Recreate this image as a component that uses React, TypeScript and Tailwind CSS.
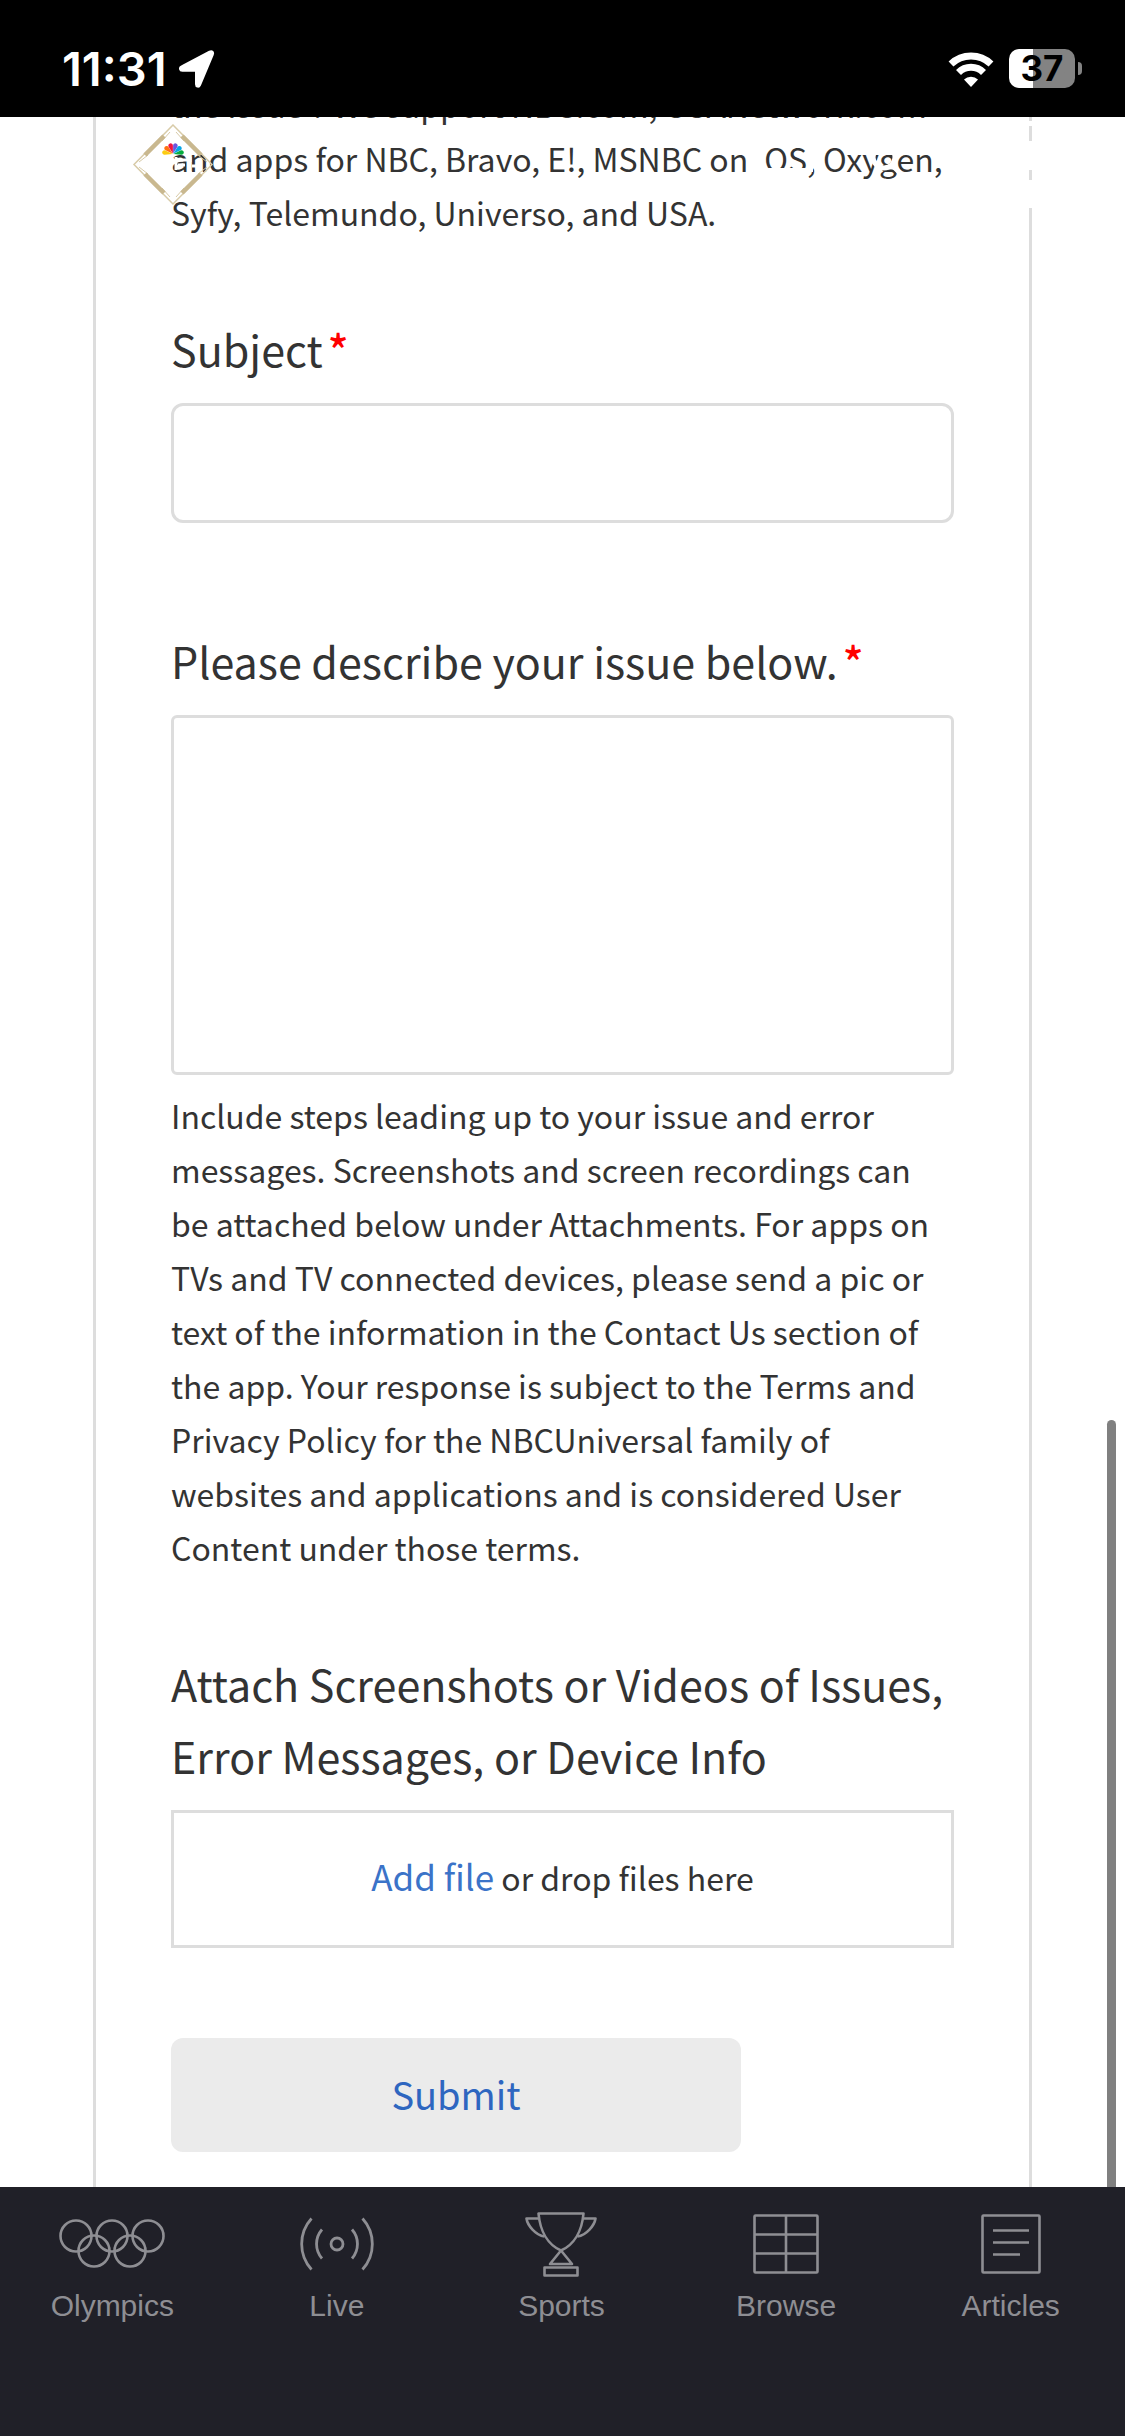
import React from 'react';

const fieldLabel = 'text-[43px] leading-[72px]';
const helpText = 'text-[32px] leading-[54px]';

const tabs = [
  { label: 'Olympics', icon: <OlympicsIcon /> },
  { label: 'Live', icon: <LiveIcon /> },
  { label: 'Sports', icon: <TrophyIcon /> },
  { label: 'Browse', icon: <BrowseIcon /> },
  { label: 'Articles', icon: <ArticlesIcon /> },
];

function OlympicsIcon() {
  return (
    <svg className="h-[66px] w-[108px]" viewBox="0 0 108 66" fill="none" stroke="currentColor" strokeWidth="2.6" aria-hidden="true">
      <circle cx="18" cy="25" r="15.5" />
      <circle cx="54" cy="25" r="15.5" />
      <circle cx="90" cy="25" r="15.5" />
      <circle cx="36" cy="40" r="15.5" />
      <circle cx="72" cy="40" r="15.5" />
    </svg>
  );
}

function LiveIcon() {
  return (
    <svg className="h-[66px] w-[76px]" viewBox="0 0 76 66" fill="none" stroke="currentColor" strokeWidth="2.8" aria-hidden="true">
      <circle cx="38" cy="33" r="6" />
      <path d="M23 18.500a22 22 0 0 0 0 29M53 18.500a22 22 0 0 1 0 29M12.500 7.500a38 38 0 0 0 0 51M63.500 7.500a38 38 0 0 1 0 51" />
    </svg>
  );
}

function TrophyIcon() {
  return (
    <svg className="h-[66px] w-[74px]" viewBox="0 0 74 66" fill="none" stroke="currentColor" strokeWidth="2.6" strokeLinejoin="round" aria-hidden="true">
      <path d="M14.500 2.500h45c-1.500 17-9 31-22.500 37C23.500 33.500 16 19.500 14.500 2.500z" />
      <path d="M14.500 7.500H2.500c1 7 9 16.500 18 18M59.500 7.500h12c-1 7-9 16.500-18 18M37 39.500L26 53h22zM20.500 56.500h33v8h-33z" />
    </svg>
  );
}

function BrowseIcon() {
  return (
    <svg className="h-[66px] w-[66px]" viewBox="0 0 66 66" fill="none" stroke="currentColor" strokeWidth="2.6" aria-hidden="true">
      <rect x="1.500" y="4.500" width="63" height="57" rx="1" />
      <path d="M33 4.500v57M1.500 23.500h63M1.500 42.500h63" />
    </svg>
  );
}

function ArticlesIcon() {
  return (
    <svg className="h-[66px] w-[60px]" viewBox="0 0 60 66" fill="none" stroke="currentColor" strokeWidth="2.6" aria-hidden="true">
      <rect x="1.500" y="4.500" width="57" height="57" rx="1" />
      <path d="M12 19.500h36M12 31.500h36M12 43.500h27" />
    </svg>
  );
}

const feathers = [
  { angle: -80, color: '#fccc12' },
  { angle: -48, color: '#ff7112' },
  { angle: -16, color: '#ef1541' },
  { angle: 16, color: '#6e55dc' },
  { angle: 48, color: '#05a5e6' },
  { angle: 80, color: '#05ac3f' },
];

function LogoBadge() {
  return (
    <svg className="absolute left-[132px] top-[7px] h-[82px] w-[82px]" viewBox="0 0 82 82" fill="none" aria-hidden="true">
      <path d="M44 33v13M48 36h7M46 41h7M58 33v5M60 42h5M58 47v3" stroke="#fff" strokeWidth="3" />
      {feathers.map(({ angle, color }) => (
        <path key={color} d="M41 29.500l-2.200-7.500a2.300 2.300 0 1 1 4.400 0z" fill={color} transform={`rotate(${angle} 41 30)`} />
      ))}
      <path d="M41 1L80 40.500L41 80L2 40.500z" stroke="#d8cba8" strokeWidth="1.500" />
      <path d="M38 8l-8 9M44 8l8 9M38 73l-8-9M44 73l8-9M7 38l9-7M7 43l9 7M75 38l-9-7M75 43l-9 7" stroke="#d8cba8" strokeWidth="1" />
      <path d="M32 12L13 31M50 12L69 31M32 69L13 50M50 69L69 50" stroke="#c9b88f" strokeWidth="4.500" />
    </svg>
  );
}

// White toolbar icons, they only show where they pass over the form
function ToolbarIcons() {
  return (
    <svg className="absolute right-[65px] top-0 h-[92px] w-[310px]" viewBox="0 0 310 92" fill="none" stroke="#fff" aria-hidden="true">
      <path d="M10 20v36" strokeWidth="9" />
      <path d="M15 53h48" strokeWidth="4" />
      <circle cx="134" cy="40" r="11" strokeWidth="5" />
      <path d="M142 48l13 13" strokeWidth="5" />
      <path d="M281 4v5M281 24v29M281 63v28" strokeWidth="8" />
    </svg>
  );
}

function StatusBar() {
  return (
    <header className="flex h-[117px] shrink-0 items-center justify-between bg-black pl-[62px] pr-[43px] pt-[20px] text-white">
      <div className="flex items-center gap-[12px]">
        <span className="font-['Inter',sans-serif] text-[47px] font-semibold leading-[52px]">11:31</span>
        <svg className="h-[38px] w-[36px]" viewBox="0 0 36 38" fill="currentColor" stroke="currentColor" strokeWidth="2" strokeLinejoin="round" aria-hidden="true">
          <path d="M30.500 1.600c2.600-1.200 4.200.5 3.300 2.900L21 35c-1 2.500-4 2-4-.8V20.700H3.400c-2.800 0-3.300-3.100-.8-4.200z" />
        </svg>
      </div>
      <div className="flex items-center gap-[15px]">
        <svg className="h-[36px] w-[46px]" viewBox="0 0 46 36" fill="none" stroke="currentColor" strokeWidth="7" aria-hidden="true">
          <path d="M3 13a29 29 0 0 1 40 0M10.500 21.500a17.500 17.500 0 0 1 25 0" />
          <path d="M16 28.500a10 10 0 0 1 14 0L23 36z" fill="currentColor" stroke="none" />
        </svg>
        <div className="flex items-center gap-[3px]">
          <div className="flex h-[39px] w-[66px] items-center justify-center rounded-[10px] bg-linear-to-r from-white from-37% to-[#838383] to-37%">
            <span className="font-['Inter',sans-serif] text-[35px] font-bold leading-[39px] text-black">37</span>
          </div>
          <div className="h-[13px] w-[4px] rounded-r-full bg-[#838383]" />
        </div>
      </div>
    </header>
  );
}

const Required = () => <span className="ml-[5px] font-medium leading-none text-[#f00]">*</span>;

export default function App() {
  return (
    <div className="flex h-screen flex-col bg-white font-['Noto_Sans_CJK_SC',sans-serif] text-[#333]">
      <StatusBar />

      <main className="relative flex min-h-0 flex-1 flex-col justify-end overflow-hidden px-[93px]">
        <form className="border-x-[3px] border-[#ddd] px-[75px] pb-[35px]" onSubmit={(e) => e.preventDefault()}>
          <p className={helpText}>
            the issue ? We support NBC.com, USANetwork.com and apps for NBC, Bravo, E!, MSNBC on iOS, Oxygen, Syfy, Telemundo, Universo, and USA.
          </p>

          <div className="mt-[73px]">
            <label htmlFor="subject" className={`${fieldLabel} block`}>Subject<Required /></label>
            <input id="subject" type="text" required className="mt-[19px] block h-[120px] w-full rounded-[12px] border-[3px] border-[#ddd] px-6 text-[35px]" />
          </div>

          <div className="mt-[101px]">
            <label htmlFor="description" className={`${fieldLabel} block`}>Please describe your issue below.<Required /></label>
            <textarea id="description" required className="mt-[19px] block h-[360px] w-full resize-none rounded-[6px] border-[3px] border-[#ddd] p-6 text-[35px]" />
            <p className={`${helpText} mt-[13px]`}>
              Include steps leading up to your issue and error messages. Screenshots and screen recordings can be attached below under Attachments. For apps on TVs and TV connected devices, please send a pic or text of the information in the Contact Us section of the app. Your response is subject to the Terms and Privacy Policy for the NBCUniversal family of websites and applications and is considered User Content under those terms.
            </p>
          </div>

          <div className="mt-[73px]">
            <h2 className={fieldLabel}>Attach Screenshots or Videos of Issues, Error Messages, or Device Info</h2>
            <div className="mt-[19px] flex h-[138px] items-center justify-center border-[3px] border-[#ddd] pb-[5px]">
              <p className={helpText}>
                <a href="#add-file" className="text-[35px] text-[#3b73c8]">Add file</a> or drop files here
              </p>
            </div>
          </div>

          <button type="submit" className="mt-[90px] block h-[114px] w-[570px] rounded-[12px] bg-[#ebebeb] pb-[3px] text-[38px] text-[#2e66c0]">
            Submit
          </button>
        </form>

        <ToolbarIcons />
        <LogoBadge />
        <div className="absolute bottom-0 right-[9px] top-[1303px] w-[9px] rounded-t-full bg-[#808080]" />
      </main>

      <nav className="grid h-[249px] shrink-0 grid-cols-5 bg-[#202028] pr-[2px] pt-[24px] font-['Liberation_Sans',Arial,sans-serif] text-[#8e8e93]">
        {tabs.map((tab) => (
          <button key={tab.label} type="button" className="flex flex-col items-center justify-start gap-[11px]">
            {tab.icon}
            <span className="text-[30px] leading-[36px]">{tab.label}</span>
          </button>
        ))}
      </nav>
    </div>
  );
}
